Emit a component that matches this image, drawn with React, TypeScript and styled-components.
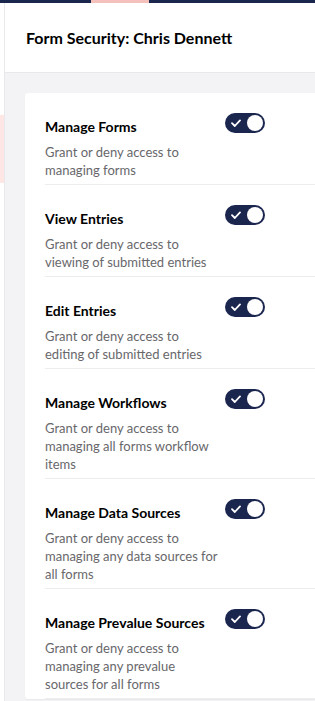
import styled, { createGlobalStyle } from 'styled-components';

const GlobalStyle = createGlobalStyle`
  html, body {
    margin: 0;
    padding: 0;
    height: 701px;
    overflow: hidden;
    background: #ffffff;
    font-family: Lato, "Open Sans", sans-serif;
  }
`;

const TopBar = styled.div`
  height: 3px;
  background: #1b264f;
  display: flex;
`;

const TopBarActive = styled.div`
  margin-left: 91px;
  width: 58px;
  background: #f5c1bc;
`;

const Shell = styled.div`
  display: flex;
  height: 698px;
`;

const Sidebar = styled.div`
  width: 4px;
  flex-shrink: 0;
  border-right: 1px solid #e9e9eb;
  background: #ffffff;
`;

const SidebarActive = styled.div`
  margin-top: 112px;
  height: 68px;
  background: #fde6e4;
`;

const Main = styled.div`
  flex: 1;
  display: flex;
  flex-direction: column;
  background: #f3f3f5;
  min-width: 0;
`;

const Header = styled.div`
  height: 69px;
  flex-shrink: 0;
  display: flex;
  align-items: center;
  padding-left: 21px;
  background: #ffffff;
  border-bottom: 1px solid #e9e9eb;
`;

const Title = styled.h1`
  margin: 0;
  font-size: 16px;
  font-weight: 700;
  color: #000000;
`;

const Content = styled.div`
  padding: 20px 0 0 20px;
`;

const Card = styled.div`
  background: #ffffff;
  border-radius: 3px 0 0 3px;
  padding-left: 20px;
  box-shadow: 0 1px 1px rgba(0, 0, 0, 0.04);
`;

const Row = styled.div`
  display: flex;
  align-items: flex-start;
  padding: 20px 0 5px;
  border-bottom: 1px solid #ededee;
`;

const Info = styled.div`
  width: 175px;
  flex-shrink: 0;
`;

const Name = styled.div`
  margin-top: 4px;
  font-size: 14px;
  line-height: 20px;
  font-weight: 700;
  color: #000000;
`;

const Description = styled.div`
  margin-top: 6px;
  font-size: 13px;
  line-height: 18px;
  color: #68676b;
`;

const Toggle = styled.div`
  margin-left: 5px;
  width: 40px;
  height: 20px;
  border-radius: 10px;
  background: #1b264f;
  display: flex;
  align-items: center;
  justify-content: space-between;
  padding: 0 2px 0 6px;
  box-sizing: border-box;
`;

const Knob = styled.div`
  width: 16px;
  height: 16px;
  border-radius: 50%;
  background: #ffffff;
`;

const permissions = [
  { name: 'Manage Forms', description: 'Grant or deny access to managing forms' },
  { name: 'View Entries', description: 'Grant or deny access to viewing of submitted entries' },
  { name: 'Edit Entries', description: 'Grant or deny access to editing of submitted entries' },
  { name: 'Manage Workflows', description: 'Grant or deny access to managing all forms workflow items' },
  { name: 'Manage Data Sources', description: 'Grant or deny access to managing any data sources for all forms' },
  { name: 'Manage Prevalue Sources', description: 'Grant or deny access to managing any prevalue sources for all forms' },
];

const Check = () => (
  <svg width="10" height="8" viewBox="0 0 10 8">
    <path d="M1 4.2 L3.8 7 L9 1.4" fill="none" stroke="#ffffff" strokeWidth="1.8" strokeLinecap="round" strokeLinejoin="round" />
  </svg>
);

const App = () => (
  <>
    <GlobalStyle />
    <TopBar>
      <TopBarActive />
    </TopBar>
    <Shell>
      <Sidebar>
        <SidebarActive />
      </Sidebar>
      <Main>
        <Header>
          <Title>Form Security: Chris Dennett</Title>
        </Header>
        <Content>
          <Card>
            {permissions.map((p) => (
              <Row key={p.name}>
                <Info>
                  <Name>{p.name}</Name>
                  <Description>{p.description}</Description>
                </Info>
                <Toggle>
                  <Check />
                  <Knob />
                </Toggle>
              </Row>
            ))}
          </Card>
        </Content>
      </Main>
    </Shell>
  </>
);

export default App;
